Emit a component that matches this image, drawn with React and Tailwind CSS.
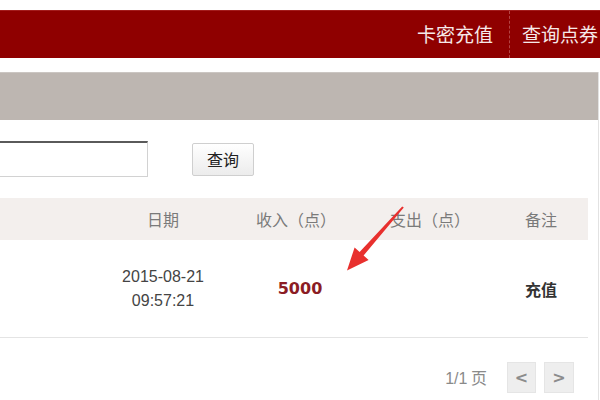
import React from "react";

const cjk = { fontFamily: '"Microsoft YaHei", "Noto Sans CJK SC", sans-serif' };

const cols = "grid grid-cols-[100px_126px_140px_128px_94px]";

const Arrow = () => (
    <svg className="absolute left-0 top-0 pointer-events-none" width="600" height="400" viewBox="0 0 600 400">
        <polygon
            points="403.8,207.6 363.6,255.4 368.6,260 347,270.5 354.6,247.4 359.6,252 402.2,206.4"
            fill="#e8302e"
        />
    </svg>
);

export default function App() {
    return (
        <div className="relative w-[600px] h-[400px] overflow-hidden bg-white" style={cjk}>
            {/* top nav */}
            <div className="mt-[10px] h-[48px] bg-[#8f0000] border-t border-[#a31d1d] flex justify-end items-stretch">
                <div className="flex items-center pr-[16px] text-[19px] text-[#f6e9e9]">卡密充值</div>
                <div className="border-l border-dashed border-[#b34545]" />
                <div className="flex items-center pl-[12px] pr-[2px] text-[19px] text-[#f6e9e9] whitespace-nowrap">查询点券</div>
            </div>

            <div className="mt-[14px] w-[599px] h-[328px] border-r border-[#e2e2e2]">
                <div className="h-[48px] bg-[#bdb6b1] border-t border-[#cbc6c2]" />

                {/* search */}
                <div className="flex items-center mt-[21px] h-[36px]">
                    <input
                        type="text"
                        className="ml-[-10px] w-[158px] h-[36px] border border-[#d2d2d2] border-t-2 border-t-[#5a5a5a] bg-white outline-none"
                    />
                    <button className="ml-[44px] w-[62px] h-[33px] border border-[#cfcfcf] rounded-[2px] bg-gradient-to-b from-white to-[#ececec] text-[16px] text-[#222]">
                        查询
                    </button>
                </div>

                {/* table */}
                <div className="mt-[21px] w-[588px]">
                    <div className={`${cols} h-[42px] items-center bg-[#f3efed] text-[16px] text-[#7a7a7a]`}>
                        <div />
                        <div className="text-center">日期</div>
                        <div className="text-center">收入（点）</div>
                        <div className="text-center">支出（点）</div>
                        <div className="text-center">备注</div>
                    </div>
                    <div className={`${cols} h-[98px] items-center border-b border-[#e4e4e4]`}>
                        <div />
                        <div
                            className="text-center text-[16px] leading-[24px] text-[#444]"
                            style={{ fontFamily: '"Liberation Sans", Arial, sans-serif' }}
                        >
                            <div>2015-08-21</div>
                            <div>09:57:21</div>
                        </div>
                        <div
                            className="text-center text-[16px] font-bold text-[#8b1c24] pl-[8px]"
                            style={{ fontFamily: '"DejaVu Sans", Tahoma, sans-serif' }}
                        >
                            5000
                        </div>
                        <div />
                        <div className="text-center text-[16px] font-bold text-[#333]">充值</div>
                    </div>
                </div>

                {/* pager */}
                <div className="flex items-center justify-end mt-[24px] pr-[24px] gap-[8px]">
                    <span className="text-[16px] text-[#8a8a8a] mr-[12px]">
                        <span style={{ fontFamily: '"Liberation Sans", Arial, sans-serif' }}>1/1</span> 页
                    </span>
                    <button className="w-[29px] h-[31px] bg-[#eeeeee] border border-[#e5e5e5] text-[#8c8c8c] text-[16px] font-bold leading-none" style={{ fontFamily: '"DejaVu Sans", sans-serif' }}>&lt;</button>
                    <button className="w-[30px] h-[31px] bg-[#eeeeee] border border-[#e5e5e5] text-[#8c8c8c] text-[16px] font-bold leading-none" style={{ fontFamily: '"DejaVu Sans", sans-serif' }}>&gt;</button>
                </div>
            </div>

            <Arrow />
        </div>
    );
}
